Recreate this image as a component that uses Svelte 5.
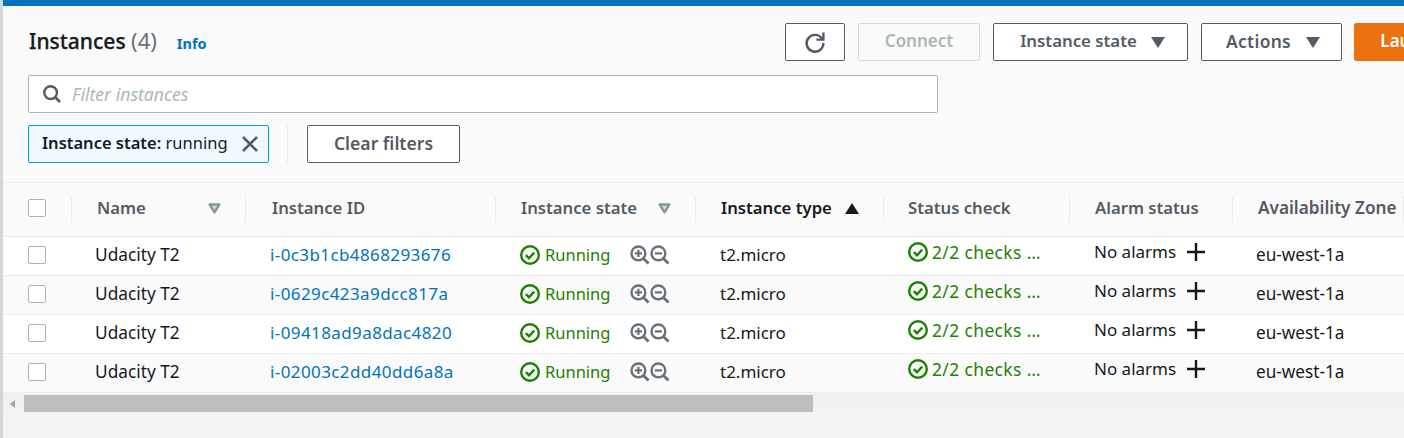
<script>
  const rows = [
    { id: 'i-0c3b1cb4868293676', white: true },
    { id: 'i-0629c423a9dcc817a', white: false },
    { id: 'i-09418ad9a8dac4820', white: true },
    { id: 'i-02003c2dd40dd6a8a', white: false }
  ];
</script>

{#snippet check()}
  <svg class="ok" width="22" height="22" viewBox="0 0 22 22" aria-hidden="true">
    <circle cx="11" cy="11" r="8.8" fill="none" stroke="#1d8102" stroke-width="2.4"/>
    <path d="M6.8 11.2l3.2 3 5.2-5.6" fill="none" stroke="#1d8102" stroke-width="2.4"/>
  </svg>
{/snippet}

{#snippet caret()}
  <svg class="caret" width="13" height="11" viewBox="0 0 13 11" aria-hidden="true"><path d="M1.7 1.5h9.6L6.5 9.3z" fill="#d5dbdb" stroke="#879596" stroke-width="2.4" stroke-linejoin="round"/></svg>
{/snippet}

<div class="page">
  <div class="topbar"></div>
  <div class="panel">
    <div class="head">
      <div class="title"><h1>Instances <span>(4)</span></h1><a href="#info">Info</a></div>
      <div class="actions">
        <button class="btn refresh" aria-label="Refresh">
          <svg width="24" height="24" viewBox="0 0 24 24"><path d="M19 8.6A8.4 8.4 0 1 0 20.4 13" fill="none" stroke="#545b64" stroke-width="2.4"/><path d="M20.4 2.6v7h-7" fill="none" stroke="#545b64" stroke-width="2.4"/></svg>
        </button>
        <button class="btn connect">Connect</button>
        <button class="btn state">Instance state <i class="tri"></i></button>
        <button class="btn act">Actions <i class="tri"></i></button>
        <button class="btn launch">Launch instances</button>
      </div>
    </div>
    <div class="search">
      <svg width="20" height="20" viewBox="0 0 20 20"><circle cx="8.6" cy="8.6" r="6.4" fill="none" stroke="#545b64" stroke-width="2.4"/><path d="M13 13l5 5" stroke="#545b64" stroke-width="2.6"/></svg>
      <span>Filter instances</span>
    </div>
    <div class="filters">
      <div class="token"><span><b>Instance state:</b> running</span>
        <svg width="18" height="18" viewBox="0 0 18 18"><path d="M2 2l14 14M16 2L2 16" stroke="#545b64" stroke-width="2.6"/></svg>
      </div>
      <div class="sep"></div>
      <button class="btn clear">Clear filters</button>
    </div>
  </div>

  <div class="table">
    <div class="row header">
      <div class="cell cb"><i class="box"></i></div>
      <div class="cell"><b>Name</b>{@render caret()}</div>
      <div class="cell"><b class="idh">Instance ID</b></div>
      <div class="cell"><b>Instance state</b>{@render caret()}</div>
      <div class="cell sorted"><b>Instance type</b><i class="up"></i></div>
      <div class="cell"><b class="sth">Status check</b></div>
      <div class="cell"><b>Alarm status</b></div>
      <div class="cell az"><b>Availability Zone</b></div>
    </div>
    {#each rows as r}
      <div class="row" class:white={r.white}>
        <div class="cell cb lift"><i class="box"></i></div>
        <div class="cell lift name">Udacity T2</div>
        <div class="cell lift"><a href="#id">{r.id}</a></div>
        <div class="cell run lift">
          {@render check()}<span class="green">Running</span>
          <span class="zoom">
            <svg width="20" height="20" viewBox="0 0 20 20"><circle cx="8.4" cy="8.4" r="6.9" fill="none" stroke="#687078" stroke-width="2.4"/><path d="M13.2 13.2l5.3 5.3" stroke="#687078" stroke-width="2.8"/><path d="M4.8 8.4h7.2M8.4 4.8v7.2" stroke="#687078" stroke-width="2.2"/></svg>
            <svg width="20" height="20" viewBox="0 0 20 20"><circle cx="8.4" cy="8.4" r="6.9" fill="none" stroke="#687078" stroke-width="2.4"/><path d="M13.2 13.2l5.3 5.3" stroke="#687078" stroke-width="2.8"/><path d="M4.8 8.4h7.2" stroke="#687078" stroke-width="2.2"/></svg>
          </span>
        </div>
        <div class="cell lift">t2.micro</div>
        <div class="cell up2 status">{@render check()}<span class="green checks">2/2 checks …</span></div>
        <div class="cell up2 alarm">No alarms
          <svg width="20" height="20" viewBox="0 0 20 20"><path d="M1 10h18M10 1v18" stroke="#16191f" stroke-width="2.4"/></svg>
        </div>
        <div class="cell lift zone">eu-west-1a</div>
      </div>
    {/each}
  </div>

  <div class="scrollbar">
    <i class="arrow"></i>
    <div class="thumb"></div>
  </div>
</div>

<style>
  :global(body) { margin: 0; background: #f2f3f3; }
  .page {
    width: 1404px; height: 438px; overflow: hidden; box-sizing: border-box;
    border-left: 3px solid #d5d5d5;
    font: 17px/22px "Noto Sans", sans-serif; color: #16191f; background: #f2f3f3;
  }
  .topbar { height: 6px; background: #0073bb; }
  .panel { background: #fafafa; padding: 17px 0 19px 25px; box-sizing: border-box; border-bottom: 1px solid #eaeded; height: 177px; }
  .head { display: flex; height: 38px; width: 1500px; }
  .title { display: flex; flex: none; align-items: baseline; width: 757px; }
  h1 { margin: -1px 0 0 1px; font-size: 21px; font-weight: 500; line-height: 36px; color: #16191f; -webkit-text-stroke: .25px #16191f; }
  h1 span { font-weight: 400; font-size: 22px; color: #687078; -webkit-text-stroke: 0; }
  .title a { margin-left: 20px; color: #0073bb; font-size: 14.5px; font-weight: 700; text-decoration: none; }
  .actions { display: flex; flex: none; gap: 13px; }
  .btn {
    box-sizing: border-box; height: 38px; border: 1px solid #545b64; border-radius: 2px; background: #fff;
    font: 600 17px/22px "Noto Sans", sans-serif; color: #545b64; padding: 0 0 2px; display: flex; align-items: center; justify-content: center;
  }
  .refresh { width: 60px; padding: 0; }
  .connect { width: 122px; border-color: #d5dbdb; background: #fafafa; color: #aab7b8; }
  .state { width: 195px; gap: 14px; font-size: 16.8px; padding-left: 4px; }
  .act { width: 141px; gap: 15px; font-size: 17.4px; padding-left: 3px; letter-spacing: .3px; }
  .launch { width: 196px; flex: none; margin-left: -1px; background: #ec7211; border-color: #ec7211; color: #fff; }
  .tri { width: 0; height: 0; border: 7.5px solid transparent; border-top: 11px solid #545b64; border-bottom: 0; margin-top: 2px; }
  .search {
    box-sizing: border-box; width: 910px; height: 38px; margin-top: 14px; background: #fff;
    border: 1px solid #aab7b8; border-radius: 2px; display: flex; align-items: center; padding-left: 13px; gap: 10px;
  }
  .search span { font-style: italic; color: #aab7b8; font-size: 17.6px; }
  .filters { display: flex; align-items: center; margin-top: 12px; height: 38px; }
  .token {
    box-sizing: border-box; width: 241px; height: 38px; background: #f1faff; border: 1px solid #00a1c9; border-radius: 2px;
    display: flex; align-items: center; padding: 0 0 2px 13px; gap: 13px; font-size: 16.5px;
  }
  .token svg { margin-top: 2px; }
  .token b { font-weight: 600; }
  .sep { width: 1px; height: 38px; background: #eaeded; margin: 0 19px 0 18px; }
  .clear { width: 153px; font-size: 17.6px; }
  .row {
    display: grid; grid-template-columns: 69px 174px 250px 200px 188px 186px 163px 171px;
    height: 39px; background: #fafafa; border-bottom: 1px solid #eaeded; box-sizing: border-box;
  }
  .row.white { background: #fff; }
  .row.header { height: 54px; }
  .cell { display: flex; align-items: center; padding-left: 24px; white-space: nowrap; min-width: 0; position: relative; }
  .cell.cb { padding-left: 25px; }
  .lift { padding-bottom: 2px; }
  .header .cell { color: #545b64; justify-content: space-between; padding-right: 25px; padding-bottom: 4px; font-size: 16.7px; }
  .header .cell::after { content: ""; position: absolute; right: 0; top: 13px; height: 26px; width: 1px; background: #eaeded; }
  .header .cell b { font-weight: 600; margin-left: 1px; }
  .header .cell b.idh { margin-left: 2px; }
  .header .cell b.sth { margin-left: 0; }
  .header .cell.az { font-size: 17.2px; padding-right: 0; }
  .header .cb { padding-right: 0; justify-content: flex-start; }
  .header .sorted { color: #16191f; justify-content: flex-start; gap: 13px; }
  .caret { margin-top: 2px; }
  .up { width: 0; height: 0; border: 7.5px solid transparent; border-bottom: 11px solid #16191f; border-top: 0; margin-top: 2px; }
  .box { display: block; width: 16px; height: 16px; background: #fff; border: 1px solid #aab7b8; border-radius: 2px; }
  .row a { color: #0073bb; text-decoration: none; letter-spacing: .4px; }
  .name { padding-left: 23px; font-size: 17.3px; }
  .zone { padding-left: 23px; font-size: 17.2px; }
  .green { color: #1d8102; font-size: 16.5px; }
  .checks { font-size: 17.4px; letter-spacing: .4px; }
  .ok { flex: none; margin-right: 3px; }
  .run .ok { margin-left: -1px; margin-right: 4px; }
  .status { padding-left: 23px; }
  .zoom { display: flex; margin-left: 20px; }
  .up2 { padding-bottom: 8px; }
  .alarm svg { margin-left: 10px; }
  .scrollbar { position: relative; height: 20px; background: #f1f1f1; display: flex; align-items: center; padding-left: 21px; }
  .arrow { position: absolute; left: 7px; top: 7px; border: 4px solid transparent; border-right: 5px solid #a3a3a3; border-left: 0; }
  .thumb { width: 789px; height: 17px; background: #bebebe; }
</style>
